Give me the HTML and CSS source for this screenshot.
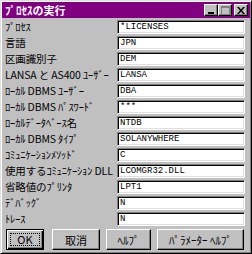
FILE: index.html
```html
<!DOCTYPE html>
<html lang="ja">
<head>
<meta charset="utf-8">
<link rel="stylesheet" href="styles.css">
</head>
<body>
<div class="window">
  <div class="titlebar">
    <span class="title">ﾌﾟﾛｾｽの実行</span>
    <div class="controls">
      <span class="tbtn"><svg width="8" height="7" viewBox="0 0 8 7"><rect x="1" y="5" width="6" height="2" fill="#000"/></svg></span>
      <span class="tbtn"><svg width="9" height="9" viewBox="0 0 9 9"><rect x="0.5" y="0.5" width="8" height="8" fill="none" stroke="#808080"/><rect x="0" y="0" width="9" height="2" fill="#808080"/></svg></span>
      <span class="tbtn close"><svg width="8" height="7" viewBox="0 0 8 7"><path d="M0 0h2l2 2.5 2-2.5h2l-3 3.5 3 3.5h-2l-2-2.5-2 2.5h-2l3-3.5z" fill="#000"/></svg></span>
    </div>
  </div>
  <div class="form">
    <div class="label">ﾌﾟﾛｾｽ</div><div class="field">*LICENSES</div>
    <div class="label">言語</div><div class="field">JPN</div>
    <div class="label">区画識別子</div><div class="field">DEM</div>
    <div class="label">LANSA と AS400 ﾕｰｻﾞｰ</div><div class="field">LANSA</div>
    <div class="label">ﾛｰｶﾙ DBMS ﾕｰｻﾞｰ</div><div class="field">DBA</div>
    <div class="label">ﾛｰｶﾙ DBMS ﾊﾟｽﾜｰﾄﾞ</div><div class="field">***</div>
    <div class="label">ﾛｰｶﾙﾃﾞｰﾀﾍﾞｰｽ名</div><div class="field">NTDB</div>
    <div class="label">ﾛｰｶﾙ DBMS ﾀｲﾌﾟ</div><div class="field">SOLANYWHERE</div>
    <div class="label">ｺﾐｭﾆｹｰｼｮﾝﾒｿｯﾄﾞ</div><div class="field">C</div>
    <div class="label">使用するｺﾐｭﾆｹｰｼｮﾝ DLL</div><div class="field">LCOMGR32.DLL</div>
    <div class="label">省略値のﾌﾟﾘﾝﾀ</div><div class="field">LPT1</div>
    <div class="label">ﾃﾞﾊﾞｯｸﾞ</div><div class="field">N</div>
    <div class="label">ﾄﾚｰｽ</div><div class="field">N</div>
  </div>
  <div class="buttons">
    <div class="btn default b-ok"><span class="focus">OK</span></div>
    <div class="btn b-cancel">取消</div>
    <div class="btn b-help">ﾍﾙﾌﾟ</div>
    <div class="btn b-param">ﾊﾟﾗﾒｰﾀｰ ﾍﾙﾌﾟ</div>
  </div>
</div>
</body>
</html>
```
FILE: styles.css
```css
html, body {
  margin: 0;
  padding: 0;
  background: #c0c0c0;
}
.window {
  width: 252px;
  height: 254px;
  box-sizing: border-box;
  background: #c0c0c0;
  border-top: 1px solid #dfdfdf;
  border-left: 1px solid #dfdfdf;
  border-right: 1px solid #000;
  border-bottom: 1px solid #000;
  box-shadow: inset 1px 1px #fff, inset -1px -1px #808080;
  padding: 1px;
  font-family: "Noto Sans CJK JP", "DejaVu Sans", sans-serif;
  font-size: 11px;
  color: #000;
  display: flex;
  flex-direction: column;
}
.titlebar {
  height: 16px;
  background: #800080;
  display: flex;
  align-items: center;
  justify-content: space-between;
  padding: 0 2px 0 3px;
}
.title {
  color: #fff;
  font-weight: bold;
  font-size: 11px;
  line-height: 16px;
}
.controls {
  display: flex;
  align-items: center;
}
.tbtn {
  width: 12px;
  height: 10px;
  background: #c0c0c0;
  border-top: 1px solid #fff;
  border-left: 1px solid #fff;
  border-right: 1px solid #000;
  border-bottom: 1px solid #000;
  box-shadow: inset -1px -1px #808080;
  display: flex;
  align-items: center;
  justify-content: center;
}
.tbtn.close {
  margin-left: 2px;
}
.form {
  display: grid;
  grid-template-columns: 112px 128px;
  grid-auto-rows: 14px;
  row-gap: 2px;
  margin-top: 2px;
  padding-left: 3px;
}
.label {
  line-height: 14px;
  white-space: nowrap;
  font-size: 10.5px;
  letter-spacing: -0.15px;
}
.field {
  box-sizing: border-box;
  height: 14px;
  background: #fff;
  border-top: 1px solid #808080;
  border-left: 1px solid #808080;
  border-right: 1px solid #fff;
  border-bottom: 1px solid #fff;
  box-shadow: inset 1px 1px #000, inset -1px -1px #dfdfdf;
  font-family: "Liberation Mono", "DejaVu Sans Mono", monospace;
  font-size: 9px;
  line-height: 12px;
  padding-left: 2px;
  white-space: nowrap;
}
.buttons {
  display: flex;
  margin-top: 3px;
  padding-left: 4px;
  height: 21px;
}
.btn {
  box-sizing: border-box;
  height: 21px;
  background: #c0c0c0;
  border-top: 1px solid #fff;
  border-left: 1px solid #fff;
  border-right: 1px solid #000;
  border-bottom: 1px solid #000;
  box-shadow: inset -1px -1px #808080;
  display: flex;
  align-items: center;
  justify-content: center;
  font-size: 11px;
  white-space: nowrap;
}
.btn.default {
  border: 1px solid #000;
  box-shadow: inset 1px 1px #fff, inset -1px -1px #000, inset -2px -2px #808080;
}
.focus {
  box-sizing: border-box;
  width: 30px;
  height: 13px;
  border: 1px dotted #000;
  line-height: 11px;
  text-align: center;
}
.b-ok { width: 38px; }
.b-cancel { width: 48px; margin-left: 8px; }
.b-help { width: 45px; margin-left: 6px; }
.b-param { width: 87px; margin-left: 6px; }
```
